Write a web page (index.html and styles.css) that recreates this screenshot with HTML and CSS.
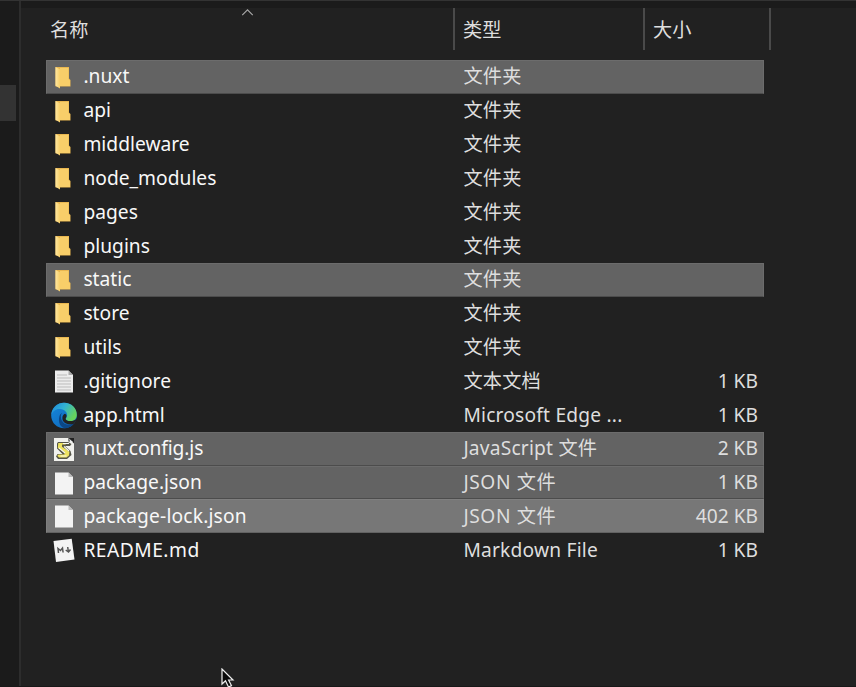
FILE: index.html
```html
<!DOCTYPE html>
<html lang="zh-CN">
<head>
<meta charset="utf-8">
<title>文件</title>
<link rel="stylesheet" href="styles.css">
</head>
<body>
<svg class="defs" width="0" height="0" aria-hidden="true">
  <defs>
    <linearGradient id="fold" x1="0" y1="0" x2="1" y2="0"><stop offset="0" stop-color="#ffe7a0"/><stop offset="1" stop-color="#f8cf68"/></linearGradient>
    <linearGradient id="edgeTop" x1="0" y1="0" x2="1" y2=".5"><stop offset="0" stop-color="#1c86dc"/><stop offset=".5" stop-color="#32b2d2"/><stop offset="1" stop-color="#67d35c"/></linearGradient>
    <linearGradient id="edgeLow" x1="0" y1="0" x2="1" y2="1"><stop offset="0" stop-color="#1687dc"/><stop offset="1" stop-color="#0e65b5"/></linearGradient>
    <symbol id="folder" viewBox="0 0 28 30">
      <path d="M5.5 4H19v11.500l1.500 1.500v6.500H5.500z" fill="#e9b750"/>
      <path d="M10 5h8.500v11l1.500 1.500V23H10z" fill="#f8ce69"/>
      <path d="M5.500 4l4.500 2.200v19.300l-4.500-2.800z" fill="url(#fold)"/>
    </symbol>
    <symbol id="file" viewBox="0 0 28 30">
      <path d="M5 3.500h13.500L23 8v17.500H5z" fill="#f3f3f3"/>
      <path d="M18.500 3.500V8H23z" fill="#bcbcbc"/>
    </symbol>
    <symbol id="text" viewBox="0 0 28 30">
      <path d="M5 3.500h13.500L23 8v17.500H5z" fill="#ececec"/>
      <path d="M18.500 3.500V8H23z" fill="#aaa"/>
      <path d="M7 8h10M7 11h14M7 14h14M7 17h14M7 20h14M7 23h14" stroke="#bbb" stroke-width="1"/>
    </symbol>
    <symbol id="edge" viewBox="0 0 28 30">
      <circle cx="14" cy="14.500" r="12.800" fill="url(#edgeLow)"/>
      <path d="M1.300 14C2 6.500 7.500 1.700 14 1.700c7.500 0 12.800 5.300 12.800 12 0 4.200-2.800 6.400-6.300 6.400-3.200 0-5-1.400-4.600-2.700.4-.9 1.500-1.500 1.200-3.900C16.600 9.800 12.800 8 9 8c-3.500 0-6.300 2.500-7.700 6z" fill="url(#edgeTop)"/>
      <path d="M12 11.800c-1.500 2-1.500 5-.2 7.700 2 4.300 7.200 5.300 12 3.100-2.500 3.500-6 4.800-9.300 4.700-3-1-4.800-3.300-5.300-6-.6-4 .2-8 2.800-9.500z" fill="#0c4786"/>
      <path d="M15.700 17.400c-.3 1.400 1.800 2.700 4.800 2.700 2.300 0 4.500-.8 6.300-2.600-.3 2-1.600 3.900-2.900 5.200-6.500 2-11.800-1.200-11.500-6 .1-2 1.100-3.500 2.600-4 2.200 1 1.700 3.200.7 4.700z" fill="#222"/>
    </symbol>
    <symbol id="script" viewBox="0 0 28 30">
      <path d="M4 3h16l4 4v19H4z" fill="#f1f1ed"/>
      <path d="M18.500 3H24v5.500L22 6.500h-3.500z" fill="#222"/>
      <path d="M19 3.500l1 3.500h3z" fill="#eee"/>
      <path d="M8 7h10l3.500 2-1.500 2h-5l5.500 5 1 4-4.500 4H8l-2-2.500L7.500 19h5L7 13.500V8.500z" fill="#555548"/>
      <path d="M8.300 8h8.200l-1 1.500h-3.500v2.200l7.500 5-.5 3.800-2.500 2H9l-1.700-1.700 1.200-1.300h6V17L7.800 13z" fill="#ede260"/>
      <path d="M13 8.500h6M14 11.500l5 4.500M10.500 21h6M9 13l6 5" stroke="#fafaf0" stroke-width="1.100"/>
    </symbol>
    <symbol id="markdown" viewBox="0 0 28 30">
      <path d="M3.500 5L21.700 2.800 24.500 23.500 6 26z" fill="#f3f3f3"/>
      <path d="M8.500 17l-.5-4.500 2.500 2 2-2.500.6 4.500M17.700 11l.7 5M15.700 14l2.800 2 2-2.500" fill="none" stroke="#555" stroke-width="1.500"/>
    </symbol>
  </defs>
</svg>
<div class="window">
  <aside class="sidebar"><div class="sidebar-item"></div></aside>
  <main class="files">
    <header class="columns">
      <div class="column name-column">名称<svg class="sort" viewBox="0 0 14 8"><path d="M1 7l6-6 6 6"/></svg></div>
      <div class="column type-column">类型</div>
      <div class="column size-column">大小</div>
    </header>
    <div class="list">
      <div class="row selected"><svg class="icon"><use href="#folder"/></svg><span class="name">.nuxt</span><span class="type">文件夹</span><span class="size"></span></div>
      <div class="row"><svg class="icon"><use href="#folder"/></svg><span class="name">api</span><span class="type">文件夹</span><span class="size"></span></div>
      <div class="row"><svg class="icon"><use href="#folder"/></svg><span class="name">middleware</span><span class="type">文件夹</span><span class="size"></span></div>
      <div class="row"><svg class="icon"><use href="#folder"/></svg><span class="name">node_modules</span><span class="type">文件夹</span><span class="size"></span></div>
      <div class="row"><svg class="icon"><use href="#folder"/></svg><span class="name">pages</span><span class="type">文件夹</span><span class="size"></span></div>
      <div class="row"><svg class="icon"><use href="#folder"/></svg><span class="name">plugins</span><span class="type">文件夹</span><span class="size"></span></div>
      <div class="row selected"><svg class="icon"><use href="#folder"/></svg><span class="name">static</span><span class="type">文件夹</span><span class="size"></span></div>
      <div class="row"><svg class="icon"><use href="#folder"/></svg><span class="name">store</span><span class="type">文件夹</span><span class="size"></span></div>
      <div class="row"><svg class="icon"><use href="#folder"/></svg><span class="name">utils</span><span class="type">文件夹</span><span class="size"></span></div>
      <div class="row"><svg class="icon"><use href="#text"/></svg><span class="name">.gitignore</span><span class="type">文本文档</span><span class="size">1 KB</span></div>
      <div class="row"><svg class="icon"><use href="#edge"/></svg><span class="name">app.html</span><span class="type">Microsoft Edge ...</span><span class="size">1 KB</span></div>
      <div class="row selected"><svg class="icon"><use href="#script"/></svg><span class="name tight">nuxt.config.js</span><span class="type">JavaScript 文件</span><span class="size">2 KB</span></div>
      <div class="row selected"><svg class="icon"><use href="#file"/></svg><span class="name">package.json</span><span class="type spaced">JSON 文件</span><span class="size">1 KB</span></div>
      <div class="row selected current"><svg class="icon"><use href="#file"/></svg><span class="name wide">package-lock.json</span><span class="type spaced">JSON 文件</span><span class="size">402 KB</span></div>
      <div class="row"><svg class="icon"><use href="#markdown"/></svg><span class="name caps">README.md</span><span class="type">Markdown File</span><span class="size">1 KB</span></div>
    </div>
  </main>
</div>
<svg class="cursor" viewBox="0 0 14 20"><path d="M1 1v15l3.500-3.300L7.500 19l3-1.400L7.600 12H12z" fill="#080808" stroke="#eee" stroke-width="1.200"/></svg>
</body>
</html>
```

FILE: styles.css
```css
* { box-sizing: border-box; }
body {
  margin: 0;
  height: 687px;
  overflow: hidden;
  background: #212121;
  color: #f8f8f8;
  font-family: "Noto Sans", "Noto Sans CJK SC", sans-serif;
  font-size: 19.2px;
}
.defs { position: absolute; }
.window {
  display: flex;
  height: 687px;
  border-top: 1px solid #333;
  border-bottom: 1px solid #181818;
}
.sidebar {
  width: 21px;
  padding-top: 84px;
  background: #1b1b1b;
  border-right: 2px solid #2d2d2d;
}
.sidebar-item { width: 16px; height: 36px; background: #333; }
.files { flex: 1; border-top: 7px solid #1b1b1b; }
.columns { display: flex; height: 42px; color: #dedede; }
.column { height: 42px; line-height: 44px; border-right: 2px solid #4a4a4a; }
.name-column { position: relative; width: 434px; padding-left: 29px; }
.type-column { width: 190px; padding-left: 8px; }
.size-column { width: 126px; padding-left: 8px; }
.sort {
  position: absolute;
  left: 220px;
  top: 1px;
  width: 13px;
  height: 7px;
  fill: none;
  stroke: #aaa;
  stroke-width: 1.3;
}
.list { width: 718px; margin: 10px 0 0 25px; }
.row {
  display: grid;
  grid-template-columns: 37.4px 380px 189.6px 105px;
  align-items: center;
  height: 33.8px;
  line-height: 32.6px;
  white-space: nowrap;
}
.selected {
  grid-template-columns: 36.4px 380px 189.6px 105px;
  background: #636363;
  border: 1px solid #6c6c6c;
  border-bottom-color: #4c4c4c;
}
.current { background: #777; border-color: #7f7f7f; border-bottom-color: #626262; }
.icon { width: 28px; height: 30px; margin: 2px 0 0 4px; }
.selected .icon { margin-left: 3px; }
.selected span { margin-top: -0.6px; }
.name { letter-spacing: 0.02px; }
.wide { letter-spacing: 0.18px; }
.tight { letter-spacing: -0.1px; }
.caps { letter-spacing: 0.5px; }
.type, .size { color: #dedede; }
.type { letter-spacing: 0.2px; }
.spaced { letter-spacing: 0.6px; }
.size { text-align: right; letter-spacing: 0; }
.cursor { position: absolute; left: 221px; top: 668px; width: 14px; height: 20px; }
```
